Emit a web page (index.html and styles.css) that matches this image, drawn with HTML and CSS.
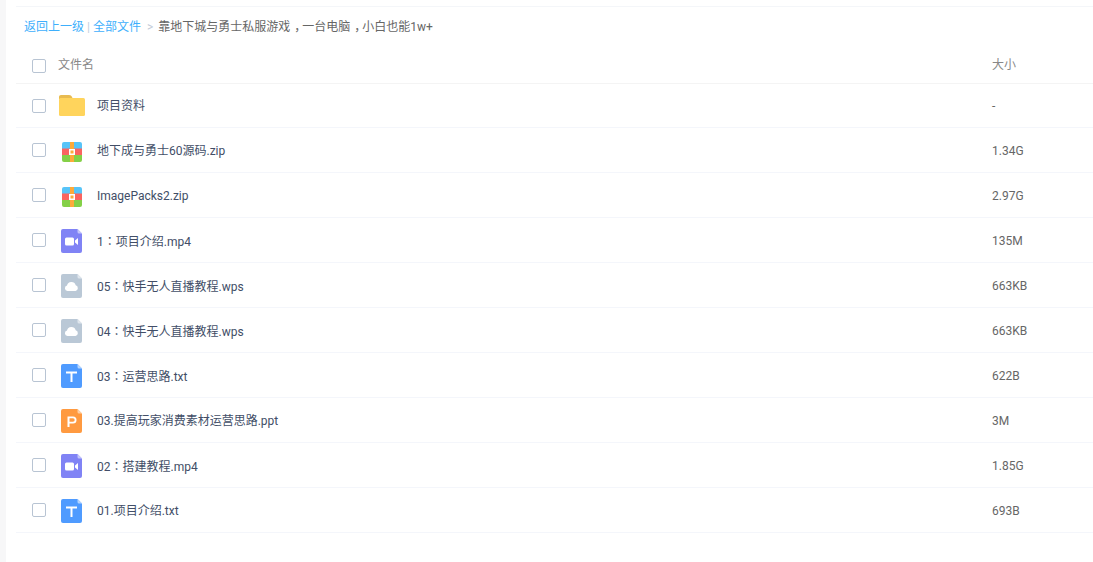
FILE: index.html
```html
<!DOCTYPE html>
<html>
<head>
    <meta charset="UTF-8" />
    <meta name="viewport" content="width=device-width, initial-scale=1.0">
    <link rel="stylesheet" href="styles.css">
</head>
<body>
    <svg class="defs">
        <symbol id="i-folder" viewBox="0 0 26 21">
            <path d="M0 4V2C0 .8.800 0 2 0h8c1.500 0 2.500.8 3 2l1 2z" fill="#e8bb50"/>
            <rect x="0" y="3" width="26" height="18" rx="1.500" fill="#ffd45c"/>
        </symbol>
        <symbol id="i-zip" viewBox="0 0 20 20">
            <path d="M0 7V2a2 2 0 0 1 2-2h16a2 2 0 0 1 2 2v5z" fill="#57c4f8"/>
            <rect y="6.500" width="20" height="7" fill="#fa6460"/>
            <path d="M0 13h20v5a2 2 0 0 1-2 2H2a2 2 0 0 1-2-2z" fill="#84d047"/>
            <rect x="8" width="4" height="20" fill="#fdaa3a"/>
            <rect x="7" y="7" width="6" height="6" fill="#fff"/>
            <rect x="8.500" y="8.500" width="3" height="3" fill="#fdaa3a"/>
        </symbol>
        <symbol id="i-video" viewBox="0 0 21 24">
            <path d="M2 0h14.500L21 4.500V22a2 2 0 0 1-2 2H2a2 2 0 0 1-2-2V2a2 2 0 0 1 2-2z" fill="#8083f5"/>
            <path d="M16.500 0L21 4.500h-3a1.500 1.500 0 0 1-1.500-1.500z" fill="#c4c6fb"/>
            <rect x="4" y="8.500" width="9" height="8" rx="1.500" fill="#fff"/>
            <path d="M14 11.500l3-2.500v7l-3-2.500z" fill="#fff"/>
        </symbol>
        <symbol id="i-cloud" viewBox="0 0 21 24">
            <path d="M2 0h14.500L21 4.500V22a2 2 0 0 1-2 2H2a2 2 0 0 1-2-2V2a2 2 0 0 1 2-2z" fill="#bac8d6"/>
            <path d="M16.500 0L21 4.500h-3a1.500 1.500 0 0 1-1.500-1.500z" fill="#dfe6ed"/>
            <path d="M6.500 17a2.800 2.800 0 0 1-.5-5.500 4.500 4.500 0 0 1 8.700-.3A3 3 0 0 1 14.500 17z" fill="#fff"/>
        </symbol>
        <symbol id="i-txt" viewBox="0 0 21 24">
            <path d="M2 0h14.500L21 4.500V22a2 2 0 0 1-2 2H2a2 2 0 0 1-2-2V2a2 2 0 0 1 2-2z" fill="#4f9bff"/>
            <path d="M16.500 0L21 4.500h-3a1.500 1.500 0 0 1-1.500-1.500z" fill="#b5d5ff"/>
            <path d="M5 7.500h11v2h-4.500V18h-2V9.500H5z" fill="#fff"/>
        </symbol>
        <symbol id="i-ppt" viewBox="0 0 21 24">
            <path d="M2 0h14.500L21 4.500V22a2 2 0 0 1-2 2H2a2 2 0 0 1-2-2V2a2 2 0 0 1 2-2z" fill="#ff9a40"/>
            <path d="M16.500 0L21 4.500h-3a1.500 1.500 0 0 1-1.500-1.500z" fill="#ffd0a6"/>
            <path fill-rule="evenodd" d="M6.500 7.500H12a3.500 3.500 0 0 1 0 7H8.500V18h-2zM8.500 9.300v3.400H12a1.700 1.700 0 0 0 0-3.400z" fill="#fff"/>
        </symbol>
    </svg>

    <div class="page">
        <div class="strip"></div>
        <main class="content">
            <div class="crumbs">
                <a href="#">返回上一级</a>
                <span class="pipe">|</span>
                <a href="#">全部文件</a>
                <span class="gt">&gt;</span>
                <span class="here">靠地下城与勇士私服游戏<span class="cm">，</span>一台电脑<span class="cm">，</span>小白也能1w+</span>
            </div>

            <div class="row head">
                <span class="check"></span>
                <span class="name">文件名</span>
                <span class="size">大小</span>
            </div>

            <div class="row first">
                <span class="check"></span>
                <span class="icon"><svg class="ic-folder"><use href="#i-folder"/></svg></span>
                <span class="name">项目资料</span>
                <span class="size">-</span>
            </div>
            <div class="row">
                <span class="check"></span>
                <span class="icon"><svg class="ic-zip"><use href="#i-zip"/></svg></span>
                <span class="name">地下成与勇士60源码.zip</span>
                <span class="size">1.34G</span>
            </div>
            <div class="row">
                <span class="check"></span>
                <span class="icon"><svg class="ic-zip"><use href="#i-zip"/></svg></span>
                <span class="name">ImagePacks2.zip</span>
                <span class="size">2.97G</span>
            </div>
            <div class="row">
                <span class="check"></span>
                <span class="icon"><svg class="ic-file"><use href="#i-video"/></svg></span>
                <span class="name">1<span class="fw">：</span>项目介绍.mp4</span>
                <span class="size">135M</span>
            </div>
            <div class="row">
                <span class="check"></span>
                <span class="icon"><svg class="ic-file"><use href="#i-cloud"/></svg></span>
                <span class="name">05<span class="fw">：</span>快手无人直播教程.wps</span>
                <span class="size">663KB</span>
            </div>
            <div class="row">
                <span class="check"></span>
                <span class="icon"><svg class="ic-file"><use href="#i-cloud"/></svg></span>
                <span class="name">04<span class="fw">：</span>快手无人直播教程.wps</span>
                <span class="size">663KB</span>
            </div>
            <div class="row">
                <span class="check"></span>
                <span class="icon"><svg class="ic-file"><use href="#i-txt"/></svg></span>
                <span class="name">03<span class="fw">：</span>运营思路.txt</span>
                <span class="size">622B</span>
            </div>
            <div class="row">
                <span class="check"></span>
                <span class="icon"><svg class="ic-file"><use href="#i-ppt"/></svg></span>
                <span class="name">03.提高玩家消费素材运营思路.ppt</span>
                <span class="size">3M</span>
            </div>
            <div class="row">
                <span class="check"></span>
                <span class="icon"><svg class="ic-file"><use href="#i-video"/></svg></span>
                <span class="name">02<span class="fw">：</span>搭建教程.mp4</span>
                <span class="size">1.85G</span>
            </div>
            <div class="row">
                <span class="check"></span>
                <span class="icon"><svg class="ic-file"><use href="#i-txt"/></svg></span>
                <span class="name">01.项目介绍.txt</span>
                <span class="size">693B</span>
            </div>
        </main>
    </div>
</body>
</html>
```

FILE: styles.css
```css
* {
    margin: 0;
    padding: 0;
    box-sizing: border-box;
}

html, body {
    height: 100%;
    overflow: hidden;
}

body {
    background: #fff;
    color: #424e67;
    font-family: Roboto, "Noto Sans CJK SC", sans-serif;
    font-size: 12px;
    line-height: 16px;
}

.defs {
    display: none;
}

.page {
    display: flex;
    height: 100%;
}

.strip {
    width: 6px;
    background: #f7f7f8;
}

.content {
    flex: 1;
    margin-left: 10px;
    margin-top: 6px;
    border-top: 1px solid #f4f6f9;
}

.crumbs {
    height: 38px;
    padding-left: 8px;
    padding-top: 2px;
    display: flex;
    align-items: center;
    gap: 3px;
}

.crumbs a {
    color: #3eaffc;
    text-decoration: none;
}

.pipe {
    color: #c3d0dc;
}

.gt {
    color: #c3cbd8;
    margin: 0 2px 0 3px;
}

.here {
    color: #666;
}

/* comma sits in the middle of its cell, not at the left */
.cm {
    margin-left: 4px;
    letter-spacing: -4px;
}

.row {
    height: 45px;
    display: flex;
    align-items: center;
    border-bottom: 1px solid #f4f6fb;
}

.row.first {
    height: 44px;
}

.row.head {
    height: 39px;
    color: #888;
    border-bottom-color: #f4f4f4;
}

.row.head .check {
    margin-top: 4px;
}

.row.head .name {
    margin-left: 12px;
    color: #888;
}

.row.head .size {
    color: #888;
}

.check {
    width: 14px;
    height: 14px;
    margin-left: 16px;
    border: 1px solid #b8c4d3;
    border-radius: 2px;
    background: #fff;
}

.icon {
    width: 51px;
    display: flex;
    justify-content: center;
}

.ic-folder {
    width: 26px;
    height: 21px;
    margin-left: 1px;
}

.ic-zip {
    width: 20px;
    height: 20px;
    margin-top: 4px;
}

.ic-file {
    width: 21px;
    height: 24px;
    margin-top: 2px;
}

.name {
    flex: 1;
    padding-top: 2px;
    color: #424e67;
}

/* centred full-width colon, as the TC face draws it */
.fw {
    font-family: "Noto Sans CJK TC", sans-serif;
}

.size {
    width: 101px;
    padding-top: 2px;
    color: #666;
}

.row.first .name,
.row.first .size {
    padding-top: 0;
}
```
